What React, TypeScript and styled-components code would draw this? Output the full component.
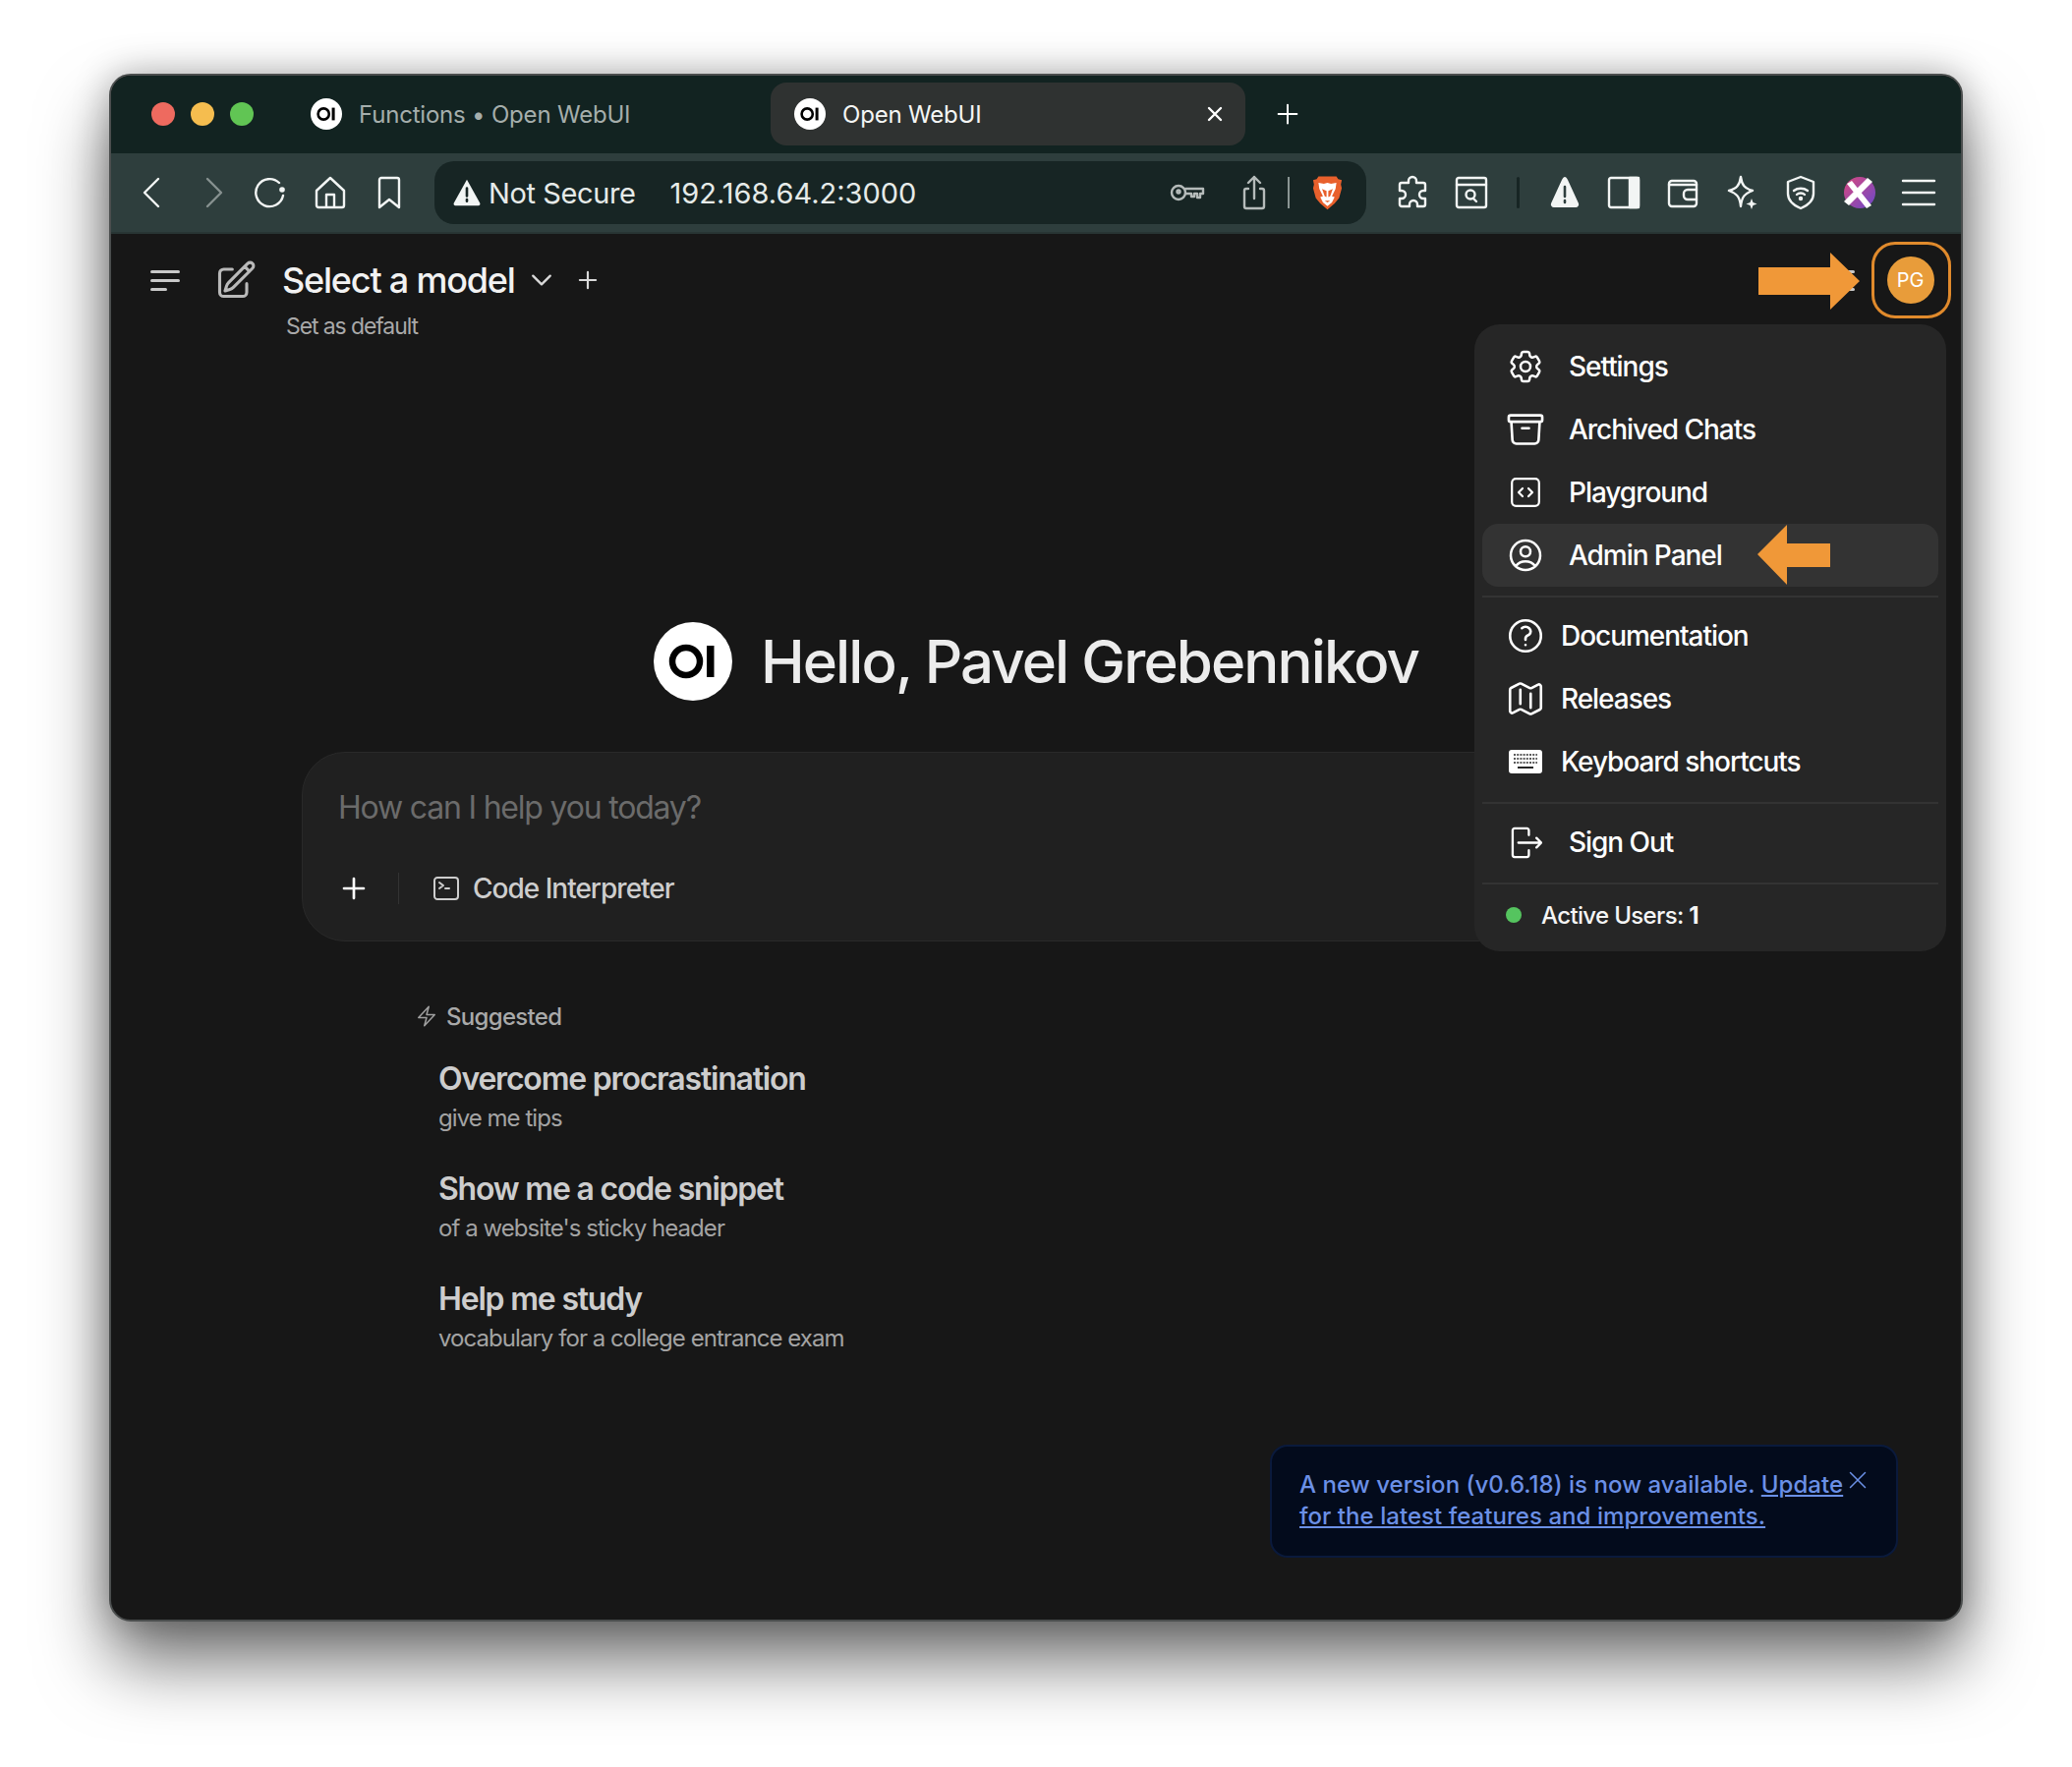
import React from 'react';
import styled, { createGlobalStyle } from 'styled-components';
import {
  HiOutlineArchiveBox,
  HiOutlineBolt,
  HiOutlineChevronDown,
  HiOutlineCog6Tooth,
  HiOutlineCommandLine,
  HiOutlineMap,
  HiOutlinePencilSquare,
  HiOutlinePlus,
  HiOutlineQuestionMarkCircle,
  HiOutlineUserCircle,
  HiOutlineXMark,
} from 'react-icons/hi2';

const GlobalStyle = createGlobalStyle`
  html, body {
    margin: 0;
    background: #ffffff;
    font-family: Inter, "Liberation Sans", sans-serif;
  }
`;

const OiLogo = ({ size }: { size: number }) => (
  <svg width={size} height={size} viewBox="0 0 80 80">
    <circle cx="40" cy="40" r="40" fill="#ffffff" />
    <circle cx="33" cy="40" r="14" fill="none" stroke="#000000" strokeWidth="6.5" />
    <rect x="54" y="24" width="7.5" height="32" fill="#000000" />
  </svg>
);

const ToolIcon = ({ children, filled }: { children: React.ReactNode; filled?: boolean }) => (
  <ToolSvg viewBox="0 0 36 36" $filled={filled}>
    {children}
  </ToolSvg>
);

const BraveIcon = () => (
  <svg width="31" height="36" viewBox="0 0 34 38">
    <path d="M7 1h20l2 3 4 1-1 5 1 4-3 11-5 6-8 7-8-7-5-6-3-11 1-4-1-5 4-1z" fill="#e8602c" />
    <path d="M7 8l6 1 4-1 4 1 6-1-1 7-4 8 3 1-3 6-5 4-5-4-3-6 3-1-4-8z" fill="#ffffff" />
    <path d="M11 15l5 2v7l-2-1zM23 15l-5 2v7l2-1zM14 28h6l-3 2z" fill="#e8602c" />
  </svg>
);

const ExtensionBall = () => (
  <svg width="32" height="32" viewBox="0 0 32 32">
    <defs>
      <linearGradient id="ballFill" x1="0" y1="0" x2="1" y2="1">
        <stop offset="0" stopColor="#d9487f" />
        <stop offset="1" stopColor="#6a48c9" />
      </linearGradient>
    </defs>
    <circle cx="16" cy="16" r="16" fill="url(#ballFill)" />
    <path d="M3 7l5-3 20 25-5 3zM24 1l5 4-24 24-5-4z" fill="#ffffff" />
  </svg>
);

const PlaygroundIcon = () => (
  <svg width="30" height="30" viewBox="0 0 30 30" fill="none" stroke="#ffffff" strokeWidth="2.2" strokeLinecap="round" strokeLinejoin="round">
    <rect x="1.2" y="1.2" width="27.600" height="27.600" rx="4" />
    <path d="M12 11l-4 4 4 4M18 11l4 4-4 4" />
  </svg>
);

const KeyboardIcon = () => (
  <svg width="34" height="24" viewBox="0 0 34 24">
    <rect width="34" height="24" rx="3" fill="#ffffff" />
    <path
      d="M5 5h24M5 9h24M5 13h24"
      stroke="#262626"
      strokeWidth="1.6"
      strokeDasharray="2 1.2"
    />
    <rect x="9" y="17" width="16" height="2" fill="#262626" />
  </svg>
);

const SignOutIcon = () => (
  <svg width="33" height="33" viewBox="0 0 34 34" fill="none" stroke="#ffffff" strokeWidth="2.4" strokeLinecap="round" strokeLinejoin="round">
    <path d="M20 9V4a2 2 0 0 0-2-2H5a2 2 0 0 0-2 2v26a2 2 0 0 0 2 2h13a2 2 0 0 0 2-2v-5" />
    <path d="M9 17h24M28 12l5 5-5 5" />
  </svg>
);

const menuTop = [
  { label: 'Settings', icon: <HiOutlineCog6Tooth size={40} /> },
  { label: 'Archived Chats', icon: <HiOutlineArchiveBox size={42} /> },
  { label: 'Playground', icon: <PlaygroundIcon /> },
];

const menuHelp = [
  { label: 'Documentation', icon: <HiOutlineQuestionMarkCircle size={42} /> },
  { label: 'Releases', icon: <HiOutlineMap size={42} /> },
  { label: 'Keyboard shortcuts', icon: <KeyboardIcon /> },
];

const suggestions = [
  { title: 'Overcome procrastination', sub: 'give me tips' },
  { title: 'Show me a code snippet', sub: "of a website's sticky header" },
  { title: 'Help me study', sub: 'vocabulary for a college entrance exam' },
];

const App = () => {
  return (
    <>
      <GlobalStyle />
      <Page>
        <BrowserWindow>
          <TitleBar>
            <Lights>
              <Light $color="#ee6a5f" />
              <Light $color="#f5bd4f" />
              <Light $color="#61c554" />
            </Lights>
            <Tab>
              <OiLogo size={32} />
              <TabLabel>Functions • Open WebUI</TabLabel>
            </Tab>
            <Tab $active>
              <OiLogo size={32} />
              <TabLabel $active>Open WebUI</TabLabel>
              <TabClose>
                <HiOutlineXMark size={24} strokeWidth={2.4} />
              </TabClose>
            </Tab>
            <NewTab>
              <HiOutlinePlus size={30} strokeWidth={1.6} />
            </NewTab>
          </TitleBar>

          <Toolbar>
            <ToolSlot>
              <ToolIcon><path d="M23 4L9 18l14 14" /></ToolIcon>
            </ToolSlot>
            <ToolSlot $dim>
              <ToolIcon><path d="M13 4l14 14-14 14" /></ToolIcon>
            </ToolSlot>
            <ToolSlot>
              <ToolIcon>
                <path d="M26 8a14 14 0 1 0 4 13" />
                <circle cx="29" cy="15" r="2.8" fill="#f2f5f4" stroke="none" />
              </ToolIcon>
            </ToolSlot>
            <ToolSlot>
              <ToolIcon><path d="M4 16L18 3l14 13v15a2 2 0 0 1-2 2H6a2 2 0 0 1-2-2zM14 33V20h8v13" /></ToolIcon>
            </ToolSlot>
            <ToolSlot>
              <ToolIcon><path d="M8 5a2 2 0 0 1 2-2h16a2 2 0 0 1 2 2v28l-10-8-10 8z" /></ToolIcon>
            </ToolSlot>

            <UrlBar>
              <WarnWrap>
                <ToolIcon filled>
                  <path d="M18 3L33 30a2 2 0 0 1-2 3H5a2 2 0 0 1-2-3z" />
                  <path d="M18 13v9M18 26v2" stroke="#172524" strokeWidth="3" fill="none" />
                </ToolIcon>
              </WarnWrap>
              <NotSecure>Not Secure</NotSecure>
              <UrlText>192.168.64.2:3000</UrlText>
              <UrlActions>
                <UrlSlot>
                  <ToolIcon>
                    <circle cx="9" cy="18" r="7" />
                    <circle cx="9" cy="17" r="1.500" />
                    <path d="M16 14h18v5h-3v4h-3v-4h-3v3h-3v-3h-6" />
                  </ToolIcon>
                </UrlSlot>
                <UrlSlot>
                  <ToolIcon>
                    <path d="M12 14H10a2 2 0 0 0-2 2v16a2 2 0 0 0 2 2h16a2 2 0 0 0 2-2V16a2 2 0 0 0-2-2h-2M18 24V2M12 8l6-6 6 6" />
                  </ToolIcon>
                </UrlSlot>
                <UrlDivider />
                <BraveSlot>
                  <BraveIcon />
                </BraveSlot>
              </UrlActions>
            </UrlBar>

            <ToolGroup>
              <ToolSlot>
                <ToolIcon>
                  <path d="M14 6a4 4 0 0 1 8 0v2h7a2 2 0 0 1 2 2v6h-2a4 4 0 0 0 0 8h2v6a2 2 0 0 1-2 2h-6v-2a4 4 0 0 0-8 0v2H7a2 2 0 0 1-2-2v-6h2a4 4 0 0 0 0-8H5v-6a2 2 0 0 1 2-2h7z" />
                </ToolIcon>
              </ToolSlot>
              <ToolSlot>
                <ToolIcon>
                  <rect x="3" y="3" width="30" height="30" rx="2" />
                  <path d="M3 10h30" />
                  <circle cx="17" cy="20" r="4.5" />
                  <path d="M20 24l3 3" />
                </ToolIcon>
              </ToolSlot>
            </ToolGroup>
            <ToolDivider />
            <ToolGroup>
              <ToolSlot>
                <ToolIcon filled>
                  <path d="M18 2c1 0 2 1 3 3l11 24a3 3 0 0 1-3 4H7a3 3 0 0 1-3-4L15 5c1-2 2-3 3-3z" />
                  <path d="M18 12v10M18 26v2" stroke="#2e3e3d" strokeWidth="2.6" fill="none" />
                </ToolIcon>
              </ToolSlot>
              <ToolSlot>
                <ToolIcon>
                  <rect x="3" y="3" width="30" height="30" rx="2" />
                  <rect x="24" y="3" width="9" height="30" fill="#f2f5f4" />
                </ToolIcon>
              </ToolSlot>
              <ToolSlot>
                <ToolIcon>
                  <path d="M4 9a3 3 0 0 1 3-3h22a3 3 0 0 1 3 3v20a3 3 0 0 1-3 3H7a3 3 0 0 1-3-3z" />
                  <path d="M4 10h28M32 15H23a4 4 0 0 0-4 4v2a4 4 0 0 0 4 4h9" />
                </ToolIcon>
              </ToolSlot>
              <ToolSlot>
                <ToolIcon>
                  <path d="M17 2c1 8 4 12 12 14-8 3-11 6-12 16-1-10-4-13-12-16 8-2 11-6 12-14z" />
                  <path d="M28 24l1.5 4 4 1.500-4 1.500-1.500 4-1.500-4-4-1.500 4-1.500z" fill="#f2f5f4" stroke="none" />
                </ToolIcon>
              </ToolSlot>
              <ToolSlot>
                <ToolIcon>
                  <path d="M18 2l13 5v12c0 7-6 12-13 15C11 31 5 26 5 19V7z" />
                  <path d="M11 16c4-3 10-3 14 0M14 20c2-2 6-2 8 0" />
                  <circle cx="18" cy="24" r="1" />
                </ToolIcon>
              </ToolSlot>
              <ToolSlot>
                <ExtensionBall />
              </ToolSlot>
              <ToolSlot>
                <ToolIcon>
                  <path d="M2 6h32M2 18h32M2 30h32" />
                </ToolIcon>
              </ToolSlot>
            </ToolGroup>
          </Toolbar>

          <Content>
            <Header>
              <SideToggle>
                <ToggleLine $width={30} />
                <ToggleLine $width={30} />
                <ToggleLine $width={17} />
              </SideToggle>
              <EditIcon>
                <HiOutlinePencilSquare size={44} strokeWidth={1.7} />
              </EditIcon>
              <ModelColumn>
                <ModelRow>
                  <ModelName>Select a model</ModelName>
                  <ModelChevron>
                    <HiOutlineChevronDown size={28} strokeWidth={2} />
                  </ModelChevron>
                  <ModelPlus>
                    <HiOutlinePlus size={26} strokeWidth={2} />
                  </ModelPlus>
                </ModelRow>
                <SetDefault>Set as default</SetDefault>
              </ModelColumn>
              <ControlsIcon>
                <ToggleLine $width={30} />
                <ToggleLine $width={30} />
                <ToggleLine $width={30} />
              </ControlsIcon>
              <AvatarRing>
                <Avatar>PG</Avatar>
              </AvatarRing>
            </Header>

            <Hello>
              <OiLogo size={80} />
              <HelloText>Hello, Pavel Grebennikov</HelloText>
            </Hello>

            <ChatBox>
              <Placeholder>How can I help you today?</Placeholder>
              <ChatTools>
                <ChatPlus>
                  <HiOutlinePlus size={32} strokeWidth={2} />
                </ChatPlus>
                <ChatDivider />
                <HiOutlineCommandLine size={32} color="#cdcdcd" />
                <ChatToolLabel>Code Interpreter</ChatToolLabel>
              </ChatTools>
            </ChatBox>

            <Suggested>
              <SuggestedHead>
                <HiOutlineBolt size={24} color="#a0a0a0" />
                <span>Suggested</span>
              </SuggestedHead>
              <SuggestionList>
                {suggestions.map((item) => (
                  <div key={item.title}>
                    <SuggestionTitle>{item.title}</SuggestionTitle>
                    <SuggestionSub>{item.sub}</SuggestionSub>
                  </div>
                ))}
              </SuggestionList>
            </Suggested>

            <HeaderArrow viewBox="0 0 103 58">
              <path d="M0 15h73V0l30 29-30 29V43H0z" fill="#f09838" />
            </HeaderArrow>

            <Menu>
              {menuTop.map((item) => (
                <MenuItem key={item.label} $gap={28}>
                  <MenuIcon>{item.icon}</MenuIcon>
                  {item.label}
                </MenuItem>
              ))}
              <MenuItem $gap={28} $active>
                <MenuIcon>
                  <HiOutlineUserCircle size={40} />
                </MenuIcon>
                Admin Panel
                <AdminArrow viewBox="0 0 74 61">
                  <path d="M0 30L30 0v19h44v24H30v18z" fill="#f09838" />
                </AdminArrow>
              </MenuItem>
              <MenuDivider />
              {menuHelp.map((item) => (
                <MenuItem key={item.label} $gap={20}>
                  <MenuIcon>{item.icon}</MenuIcon>
                  {item.label}
                </MenuItem>
              ))}
              <MenuDivider />
              <MenuItem $gap={28}>
                <MenuIcon>
                  <SignOutIcon />
                </MenuIcon>
                Sign Out
              </MenuItem>
              <MenuDivider />
              <ActiveUsers>
                <ActiveDot />
                <span>
                  Active Users: <strong>1</strong>
                </span>
              </ActiveUsers>
            </Menu>

            <Toast>
              <ToastLine>
                A new version (v0.6.18) is now available. <u>Update</u>
              </ToastLine>
              <ToastLine>
                <u>for the latest features and improvements.</u>
              </ToastLine>
              <ToastClose>
                <HiOutlineXMark size={30} strokeWidth={1.2} />
              </ToastClose>
            </Toast>
          </Content>
        </BrowserWindow>
      </Page>
    </>
  );
};

export default App;

const Page = styled.div`
  width: 2108px;
  height: 1798px;
  padding: 75px 0 0 111px;
  box-sizing: border-box;
  overflow: hidden;
`;

const BrowserWindow = styled.div`
  width: 1886px;
  height: 1575px;
  box-sizing: border-box;
  border: 2px solid #4b4e4e;
  border-radius: 22px;
  background: #171717;
  overflow: hidden;
  box-shadow: 0 42px 70px rgba(0, 0, 0, 0.55), 0 0 36px rgba(0, 0, 0, 0.28);
`;

const TitleBar = styled.div`
  height: 79px;
  box-sizing: border-box;
  padding-bottom: 1px;
  display: flex;
  align-items: center;
  background: #122321;
`;

const Lights = styled.div`
  display: flex;
  gap: 16px;
  padding-left: 41px;
  margin-right: 58px;
`;

const Light = styled.span<{ $color: string }>`
  width: 24px;
  height: 24px;
  border-radius: 50%;
  background: ${(p) => p.$color};
`;

const Tab = styled.div<{ $active?: boolean }>`
  height: 64px;
  box-sizing: border-box;
  display: flex;
  align-items: center;
  gap: 17px;
  width: ${(p) => (p.$active ? '483px' : '468px')};
  padding-left: ${(p) => (p.$active ? '24px' : '0')};
  padding-right: 19px;
  border-radius: 16px;
  background: ${(p) => (p.$active ? '#2f3231' : 'transparent')};
`;

const TabLabel = styled.span<{ $active?: boolean }>`
  font-size: 24px;
  font-weight: 400;
  letter-spacing: -0.2px;
  color: ${(p) => (p.$active ? '#f4f6f5' : '#a5aeac')};
`;

const TabClose = styled.span`
  margin-left: auto;
  display: flex;
  color: #ffffff;
`;

const NewTab = styled.span`
  display: flex;
  margin-left: 28px;
  color: #ffffff;
`;

const Toolbar = styled.div`
  height: 82px;
  box-sizing: border-box;
  display: flex;
  align-items: center;
  padding-left: 13px;
  background: #2e3e3d;
  border-bottom: 2px solid #283534;
`;

const ToolSvg = styled.svg<{ $filled?: boolean }>`
  width: 36px;
  height: 36px;
  fill: ${(p) => (p.$filled ? '#f2f5f4' : 'none')};
  stroke: ${(p) => (p.$filled ? 'none' : '#f2f5f4')};
  stroke-width: 2.4;
  stroke-linecap: round;
  stroke-linejoin: round;
`;

const ToolSlot = styled.div<{ $dim?: boolean }>`
  width: 60px;
  display: flex;
  justify-content: center;
  align-items: center;
  opacity: ${(p) => (p.$dim ? 0.45 : 1)};
`;

const ToolGroup = styled.div`
  display: flex;
`;

const ToolDivider = styled.span`
  width: 3px;
  height: 32px;
  margin: 0 16px;
  border-radius: 2px;
  background: #172524;
`;

const UrlBar = styled.div`
  width: 948px;
  height: 64px;
  margin: 0 17px 0 16px;
  display: flex;
  align-items: center;
  border-radius: 20px;
  background: #172524;
  color: #e6ebe9;
`;

const WarnWrap = styled.span`
  display: flex;
  margin-left: 15px;
  transform: scale(0.88);
`;

const NotSecure = styled.span`
  margin-left: 4px;
  font-size: 29px;
  letter-spacing: -0.4px;
`;

const UrlText = styled.span`
  margin-left: 35px;
  font-size: 29px;
`;

const UrlActions = styled.div`
  margin-left: auto;
  display: flex;
  align-items: center;
  padding-right: 24px;
`;

const UrlSlot = styled.span`
  display: flex;
  width: 68px;
  justify-content: center;
  opacity: 0.72;
`;

const UrlDivider = styled.span`
  width: 2px;
  height: 32px;
  background: #8a9593;
  margin-right: 23px;
`;

const BraveSlot = styled.span`
  display: flex;
`;

const Content = styled.div`
  position: relative;
  height: 1412px;
  color: #ffffff;
`;

const Header = styled.header`
  display: flex;
  align-items: flex-start;
  padding: 8px 10px 0 40px;
`;

const SideToggle = styled.div`
  width: 30px;
  height: 78px;
  display: flex;
  flex-direction: column;
  justify-content: center;
  gap: 6px;
`;

const ControlsIcon = styled(SideToggle)`
  margin-left: auto;
  margin-right: 17px;
`;

const ToggleLine = styled.span<{ $width: number }>`
  width: ${(p) => p.$width}px;
  height: 3px;
  border-radius: 2px;
  background: #c9c9c9;
`;

const EditIcon = styled.span`
  height: 78px;
  display: flex;
  align-items: center;
  margin-left: 35px;
  color: #b9b9b9;
`;

const ModelColumn = styled.div`
  margin-left: 25px;
  display: flex;
  flex-direction: column;
`;

const ModelRow = styled.div`
  height: 78px;
  display: flex;
  align-items: center;
`;

const ModelName = styled.span`
  font-size: 36px;
  font-weight: 500;
  letter-spacing: -1.2px;
  color: #f2f2f2;
`;

const ModelChevron = styled.span`
  display: flex;
  margin-left: 13px;
  color: #d9d9d9;
`;

const ModelPlus = styled.span`
  display: flex;
  margin-left: 20px;
  color: #d9d9d9;
`;

const SetDefault = styled.div`
  margin: -7px 0 0 4px;
  height: 30px;
  line-height: 30px;
  font-size: 23px;
  letter-spacing: -1.1px;
  color: #a9a9a9;
`;

const AvatarRing = styled.div`
  width: 81px;
  height: 78px;
  box-sizing: border-box;
  display: flex;
  align-items: center;
  justify-content: center;
  border: 3px solid #e08a2c;
  border-radius: 24px;
`;

const Avatar = styled.span`
  width: 48px;
  height: 48px;
  margin-right: 2px;
  display: flex;
  align-items: center;
  justify-content: center;
  border-radius: 50%;
  background: #e89c3a;
  font-size: 20px;
  color: #ffffff;
`;

const Hello = styled.div`
  margin-top: 286px;
  height: 80px;
  display: flex;
  align-items: center;
  justify-content: center;
  gap: 29px;
`;

const HelloText = styled.h1`
  margin: 0;
  font-size: 60px;
  font-weight: 500;
  letter-spacing: -1.9px;
  color: #ececec;
`;

const ChatBox = styled.div`
  margin: 52px 0 0 194px;
  width: 1494px;
  height: 193px;
  box-sizing: border-box;
  padding: 34px 0 0 36px;
  border: 1px solid #292929;
  border-radius: 44px;
  background: #202020;
`;

const Placeholder = styled.div`
  line-height: 44px;
  font-size: 32px;
  letter-spacing: -1.2px;
  color: #6b6b6b;
`;

const ChatTools = styled.div`
  margin-top: 40px;
  height: 40px;
  display: flex;
  align-items: center;
  color: #cdcdcd;
`;

const ChatPlus = styled.span`
  display: flex;
  color: #ffffff;
`;

const ChatDivider = styled.span`
  width: 1px;
  height: 32px;
  margin: 0 32px 0 29px;
  background: #333333;
`;

const ChatToolLabel = styled.span`
  margin-left: 11px;
  font-size: 28px;
  font-weight: 500;
  letter-spacing: -1px;
`;

const Suggested = styled.section`
  margin: 60px 0 0 309px;
`;

const SuggestedHead = styled.div`
  height: 32px;
  display: flex;
  align-items: center;
  gap: 8px;
  font-size: 24px;
  font-weight: 500;
  letter-spacing: -0.7px;
  color: #a9a9a9;
`;

const SuggestionList = styled.div`
  margin: 28px 0 0 24px;
  display: flex;
  flex-direction: column;
  gap: 35px;
`;

const SuggestionTitle = styled.div`
  height: 40px;
  line-height: 40px;
  font-size: 32px;
  font-weight: 600;
  letter-spacing: -1.2px;
  color: #cdcdcd;
`;

const SuggestionSub = styled.div`
  margin-top: 3px;
  height: 34px;
  line-height: 34px;
  font-size: 24px;
  letter-spacing: -0.95px;
  color: #a3a3a3;
`;

const HeaderArrow = styled.svg`
  position: absolute;
  top: 19px;
  right: 103px;
  width: 103px;
  height: 58px;
`;

const Menu = styled.nav`
  position: absolute;
  top: 92px;
  right: 15px;
  width: 480px;
  height: 638px;
  box-sizing: border-box;
  padding: 11px 8px 0;
  border-radius: 26px;
  background: #262626;
`;

const MenuItem = styled.div<{ $gap: number; $active?: boolean }>`
  position: relative;
  height: 64px;
  display: flex;
  align-items: center;
  gap: ${(p) => p.$gap}px;
  padding-left: 28px;
  border-radius: 16px;
  background: ${(p) => (p.$active ? '#333333' : 'transparent')};
  font-size: 28px;
  font-weight: 500;
  letter-spacing: -1.05px;
  color: #ffffff;
`;

const MenuIcon = styled.span`
  width: 32px;
  height: 40px;
  display: flex;
  align-items: center;
  justify-content: center;
  & > svg {
    flex: none;
  }
`;

const AdminArrow = styled.svg`
  position: absolute;
  left: 280px;
  top: 1px;
  width: 74px;
  height: 61px;
`;

const MenuDivider = styled.div`
  height: 2px;
  margin: 9px 0 7px;
  background: #333333;
`;

const ActiveUsers = styled.div`
  height: 40px;
  margin-top: 11px;
  padding-left: 24px;
  display: flex;
  align-items: center;
  gap: 20px;
  font-size: 24px;
  font-weight: 500;
  letter-spacing: -0.65px;
  color: #f5f5f5;
`;

const ActiveDot = styled.span`
  width: 16px;
  height: 16px;
  border-radius: 50%;
  background: #55c45f;
`;

const Toast = styled.div`
  position: absolute;
  left: 1179px;
  top: 1232px;
  width: 639px;
  height: 115px;
  box-sizing: border-box;
  padding: 23px 28px 0;
  border: 2px solid #0a1a3c;
  border-radius: 18px;
  background: #030b1c;
  color: #6b90e6;
`;

const ToastLine = styled.div`
  font-size: 24px;
  font-weight: 500;
  line-height: 32px;
  letter-spacing: 0.05px;
`;

const ToastClose = styled.span`
  position: absolute;
  top: 19px;
  right: 24px;
  display: flex;
`;
